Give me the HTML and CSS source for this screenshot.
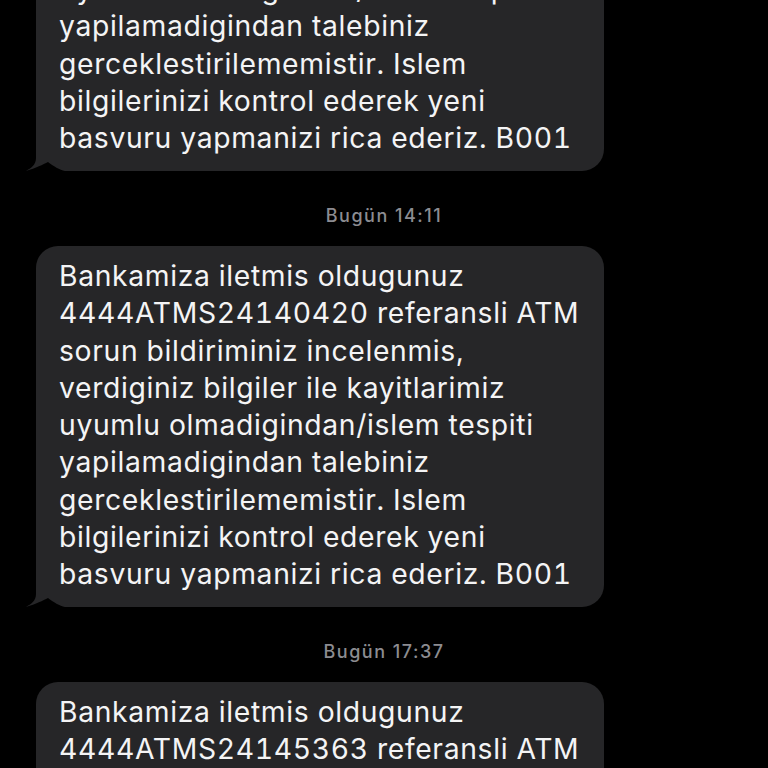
FILE: index.html
```html
<!DOCTYPE html>
<html lang="tr">
<head>
<meta charset="utf-8">
<title>Mesajlar</title>
<link rel="stylesheet" href="styles.css">
</head>
<body>
<div class="thread">
  <div class="bubble first">
    <p class="text">Bankamiza iletmis oldugunuz<br>4444ATMS24139871 referansli ATM<br>sorun bildiriminiz incelenmis,<br>verdiginiz bilgiler ile kayitlarimiz<br>uyumlu olmadigindan/islem tespiti<br>yapilamadigindan talebiniz<br>gerceklestirilememistir. Islem<br>bilgilerinizi kontrol ederek yeni<br>basvuru yapmanizi rica ederiz. B001</p>
    <svg class="tail" viewBox="-12 -30 44 30" width="44" height="30"><rect x="-12" y="-30" width="44" height="30" fill="#000"/><path d="M0,-30 H32 V0 H29 C24,-1 17,-5 12,-9 C7,-6.5 0,-3 -10,0 C-5,-3 0,-6 0,-13 Z" fill="#262628"/></svg>
  </div>
  <div class="stamp"><span class="day">Bugün</span> 14:11</div>
  <div class="bubble">
    <p class="text">Bankamiza iletmis oldugunuz<br>4444ATMS24140420 referansli ATM<br>sorun bildiriminiz incelenmis,<br>verdiginiz bilgiler ile kayitlarimiz<br>uyumlu olmadigindan/islem tespiti<br>yapilamadigindan talebiniz<br>gerceklestirilememistir. Islem<br>bilgilerinizi kontrol ederek yeni<br>basvuru yapmanizi rica ederiz. B001</p>
    <svg class="tail" viewBox="-12 -30 44 30" width="44" height="30"><rect x="-12" y="-30" width="44" height="30" fill="#000"/><path d="M0,-30 H32 V0 H29 C24,-1 17,-5 12,-9 C7,-6.5 0,-3 -10,0 C-5,-3 0,-6 0,-13 Z" fill="#262628"/></svg>
  </div>
  <div class="stamp"><span class="day">Bugün</span> 17:37</div>
  <div class="bubble">
    <p class="text">Bankamiza iletmis oldugunuz<br>4444ATMS24145363 referansli ATM<br>sorun bildiriminiz incelenmis,<br>verdiginiz bilgiler ile kayitlarimiz<br>uyumlu olmadigindan/islem tespiti<br>yapilamadigindan talebiniz<br>gerceklestirilememistir. Islem<br>bilgilerinizi kontrol ederek yeni<br>basvuru yapmanizi rica ederiz. B001</p>
    <svg class="tail" viewBox="-12 -30 44 30" width="44" height="30"><rect x="-12" y="-30" width="44" height="30" fill="#000"/><path d="M0,-30 H32 V0 H29 C24,-1 17,-5 12,-9 C7,-6.5 0,-3 -10,0 C-5,-3 0,-6 0,-13 Z" fill="#262628"/></svg>
  </div>
</div>
</body>
</html>
```

FILE: styles.css
```css
html, body {
  margin: 0;
  padding: 0;
  background: #000;
}
body {
  width: 768px;
  height: 768px;
  overflow: hidden;
  font-family: Inter, "Noto Sans", sans-serif;
}
.thread {
  display: flex;
  flex-direction: column;
  align-items: flex-start;
}
.bubble {
  position: relative;
  box-sizing: border-box;
  width: 568px;
  margin-left: 36px;
  padding: 12.1px 20px 13.65px 23px;
  background: #262628;
  border-radius: 22px;
  border-bottom-left-radius: 0;
}
.bubble.first {
  margin-top: -190px;
}
.text {
  position: relative;
  z-index: 1;
  margin: 0;
  color: #f4f4f5;
  font-size: 28.3px;
  line-height: 37.25px;
  letter-spacing: 0.65px;
  font-variant-numeric: tabular-nums;
  font-weight: 400;
  white-space: nowrap;
}
.tail {
  position: absolute;
  left: -12px;
  bottom: 0;
  display: block;
  z-index: 0;
}
.stamp {
  align-self: center;
  margin: 35px 0 20px;
  color: #8c8c91;
  font-size: 18px;
  line-height: 20px;
  letter-spacing: 1.5px;
  font-weight: 500;
}
```
